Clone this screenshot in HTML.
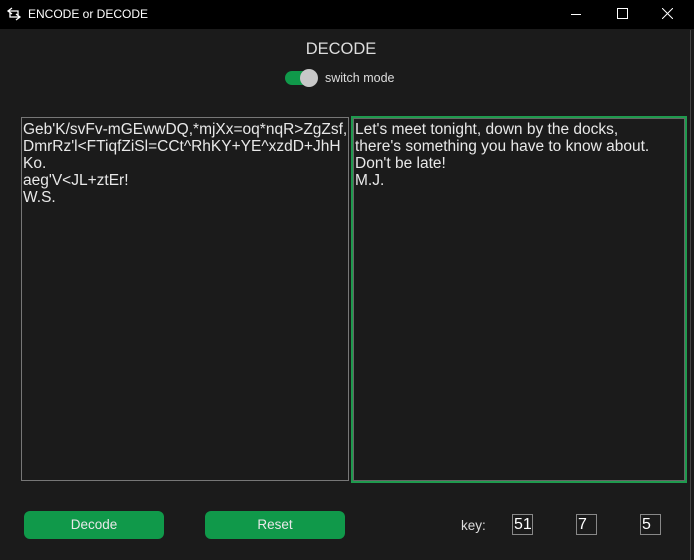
<!DOCTYPE html><html><head><style>
html,body{margin:0;width:694px;height:560px;overflow:hidden}
body{background:#1b1b1b;font-family:"Liberation Sans",sans-serif;position:relative;color:#ddd}
.tb{position:absolute;left:0;top:0;width:694px;height:29px;background:#000;color:#fff;font-size:12px}
.ta{position:absolute;font-size:15.5px;line-height:17px;color:#e8e8e8;box-sizing:border-box;padding:3px 1px;white-space:pre}
.btn{position:absolute;top:511px;width:140px;height:28px;background:#10994a;border-radius:6px;color:#e8e8e8;font-size:13.5px;text-align:center;line-height:27px}
.k{position:absolute;top:514px;width:21px;height:21px;border:1px solid #888;box-sizing:border-box;color:#fff;font-size:16px;line-height:20px;padding-left:1px}
</style></head><body>
<div class="tb">
<svg style="position:absolute;left:6px;top:6px" width="16" height="16" viewBox="0 0 16 16" fill="none" stroke="#fff" stroke-width="1.3"><path d="M6 2 L2 5 L6 8 M2 5 H12 V9 M10 14 L14 11 L10 8 M14 11 H4 V7"/></svg>
<span style="position:absolute;left:28px;top:7px">ENCODE or DECODE</span>
<div style="position:absolute;left:571px;top:14px;width:10px;height:1px;background:#fff"></div>
<div style="position:absolute;left:617px;top:8px;width:9px;height:9px;border:1px solid #fff"></div>
<svg style="position:absolute;left:662px;top:8px" width="11" height="11"><path d="M0 0L11 11M11 0L0 11" stroke="#fff"/></svg>
</div>
<div style="position:absolute;left:0;width:682px;top:40px;text-align:center;font-size:16.5px;color:#ddd">DECODE</div>
<div style="position:absolute;left:285px;top:71px;width:30px;height:14px;background:#10994a;border-radius:7px"></div>
<div style="position:absolute;left:300px;top:69px;width:18px;height:18px;background:#c8c8c8;border-radius:50%"></div>
<div style="position:absolute;left:325px;top:71px;font-size:12.5px;color:#ddd">switch mode</div>
<div class="ta" style="left:21px;top:117px;width:328px;height:364px;border:1px solid #777">Geb'K/svFv-mGEwwDQ,*mjXx=oq*nqR>ZgZsf,
DmrRz'l&lt;FTiqfZiSl=CCt^RhKY+YE^xzdD+JhH
Ko.
aeg'V&lt;JL+ztEr!
W.S.</div>
<div class="ta" style="left:351px;top:116px;width:336px;height:367px;border:2px solid #1f9a4e;box-shadow:inset 0 0 0 1px #666;padding:3px 2px">Let's meet tonight, down by the docks,
there's something you have to know about.
Don't be late!
M.J.</div>
<div style="position:absolute;left:690px;top:30px;width:1px;height:530px;background:#444"></div>
<div class="btn" style="left:24px">Decode</div>
<div class="btn" style="left:205px">Reset</div>
<div style="position:absolute;left:461px;top:518px;font-size:13.5px;color:#ddd">key:</div>
<div class="k" style="left:512px">51</div>
<div class="k" style="left:576px">7</div>
<div class="k" style="left:640px">5</div>
</body></html>
